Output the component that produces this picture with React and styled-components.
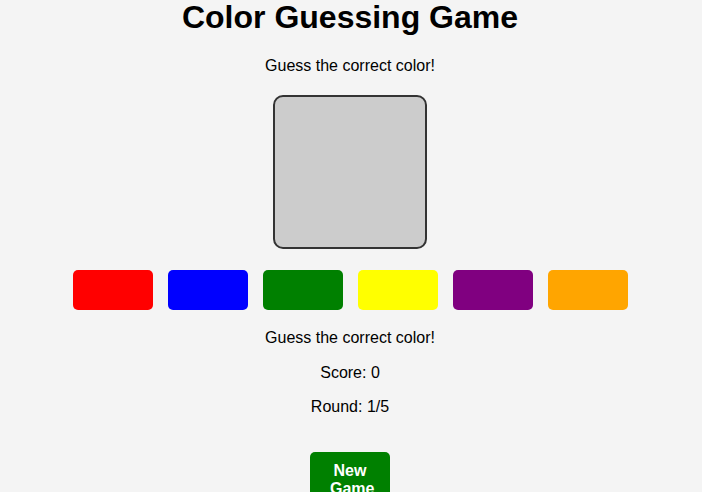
import React from "react";
import styled, { createGlobalStyle } from "styled-components";

const Global = createGlobalStyle`
  html, body { margin: 0; padding: 0; background: #f4f4f4; }
  body { font-family: "Liberation Sans", Arial, sans-serif; color: #000; overflow: hidden; }
`;

const Page = styled.div`
  display: flex;
  flex-direction: column;
  align-items: center;
  text-align: center;
  padding-right: 2px;
`;

const Title = styled.h1`
  margin: -1px 0 0;
  font-size: 32px;
  font-weight: bold;
  line-height: 37px;
`;

const Text = styled.p`
  margin: ${(p) => p.$m || "0"};
  font-size: 16px;
  line-height: 18px;
`;

const Target = styled.div`
  width: 150px;
  height: 150px;
  background: #cccccc;
  border: 2px solid #333;
  border-radius: 10px;
  margin-top: 20px;
`;

const Options = styled.div`
  display: flex;
  gap: 15px;
  margin-top: 21px;
`;

const Swatch = styled.button`
  width: 80px;
  height: 40px;
  border: none;
  border-radius: 5px;
  background: ${(p) => p.$c};
  padding: 0;
  cursor: pointer;
`;

const NewGame = styled.button`
  margin-top: 36px;
  width: 80px;
  padding: 10px 20px;
  border: none;
  border-radius: 5px;
  background: #008000;
  color: #fff;
  font-family: "Liberation Sans", Arial, sans-serif;
  font-weight: bold;
  font-size: 16px;
  line-height: 18px;
`;

const colors = ["red", "blue", "green", "yellow", "purple", "orange"];

export default function App() {
  return (
    <>
      <Global />
      <Page>
        <Title>Color Guessing Game</Title>
        <Text $m="21px 0 0">Guess the correct color!</Text>
        <Target />
        <Options>
          {colors.map((c) => (
            <Swatch key={c} $c={c} aria-label={c} />
          ))}
        </Options>
        <Text $m="19px 0 0">Guess the correct color!</Text>
        <Text $m="17px 0 0">Score: 0</Text>
        <Text $m="16px 0 0">Round: 1/5</Text>
        <NewGame>New Game</NewGame>
      </Page>
    </>
  );
}
